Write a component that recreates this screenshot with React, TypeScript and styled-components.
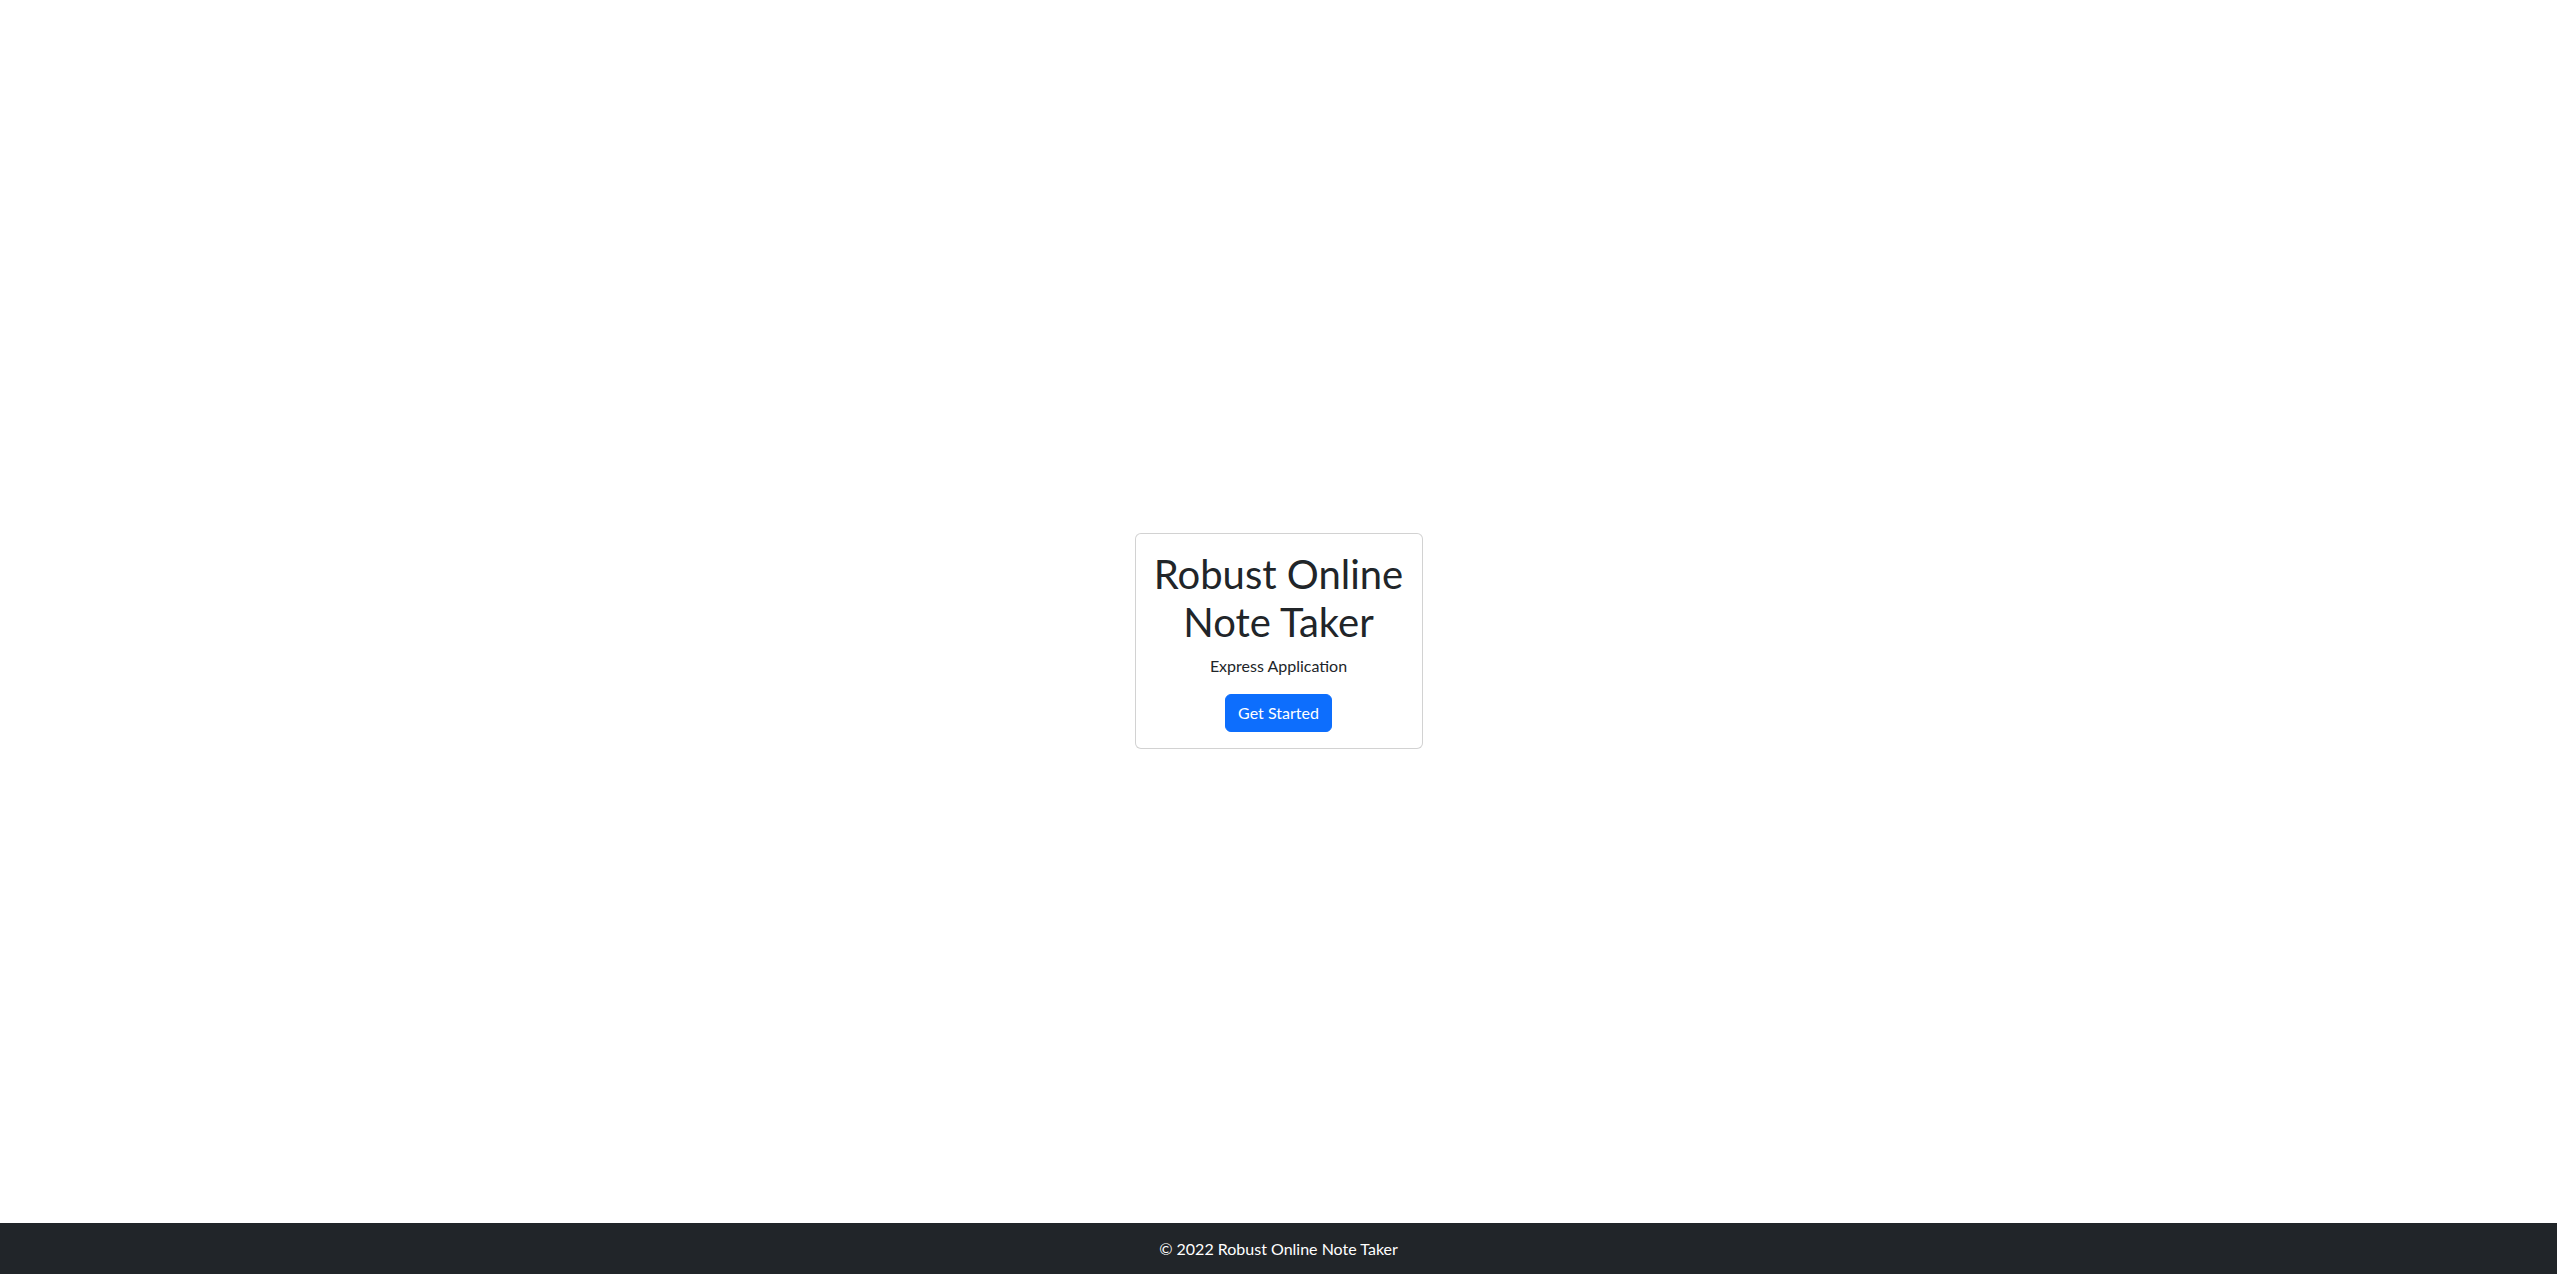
import React from "react";
import styled, { createGlobalStyle } from "styled-components";

const GlobalStyle = createGlobalStyle`
  *, *::before, *::after { box-sizing: border-box; }
  html, body { margin: 0; padding: 0; height: 100%; }
  body {
    font-family: Lato, "Open Sans", "Liberation Sans", sans-serif;
    font-size: 16px;
    line-height: 1.5;
    color: #212529;
    background: #fff;
  }
  #root { min-height: 100vh; display: flex; flex-direction: column; }
`;

const Main = styled.main`
  flex: 1;
  display: flex;
  align-items: center;
  justify-content: center;
  padding-top: 58px;
`;

const Card = styled.div`
  width: 288px;
  border: 1px solid rgba(0, 0, 0, 0.175);
  border-radius: 6px;
  background: #fff;
`;

const CardBody = styled.div`
  padding: 16px;
  display: flex;
  flex-direction: column;
  align-items: center;
  text-align: center;
`;

const Title = styled.h1`
  margin: 0 0 8px;
  font-size: 40px;
  font-weight: 400;
  line-height: 1.2;
`;

const Subtitle = styled.p`
  margin: 0 0 16px;
  font-size: 16px;
  line-height: 24px;
`;

const Button = styled.a`
  display: inline-block;
  padding: 6px 12px;
  font-size: 16px;
  line-height: 24px;
  color: #fff;
  background: #0d6efd;
  border: 1px solid #0d6efd;
  border-radius: 6px;
  text-decoration: none;
  cursor: pointer;
`;

const Footer = styled.footer`
  background: #212529;
  color: #fff;
  text-align: center;
  padding: 14px 0 13px;
  font-size: 16px;
  line-height: 24px;
`;

export default function App() {
  return (
    <>
      <GlobalStyle />
      <Main>
        <Card>
          <CardBody>
            <Title>Robust Online Note Taker</Title>
            <Subtitle>Express Application</Subtitle>
            <Button href="#">Get Started</Button>
          </CardBody>
        </Card>
      </Main>
      <Footer>© 2022 Robust Online Note Taker</Footer>
    </>
  );
}
